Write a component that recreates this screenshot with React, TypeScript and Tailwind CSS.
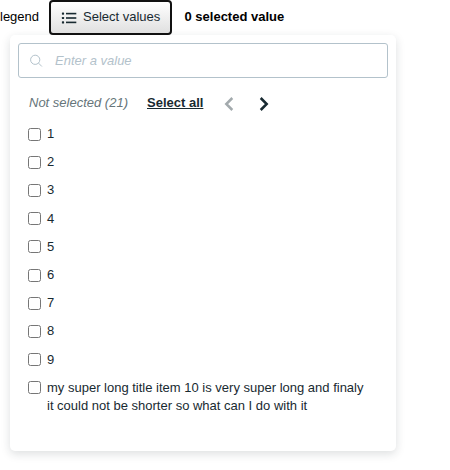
const items = [
  '1', '2', '3', '4', '5', '6', '7', '8', '9',
  'my super long title item 10 is very super long and finaly it could not be shorter so what can I do with it',
];

function ListIcon() {
  return (
    <svg width="16" height="12" viewBox="0 0 16 12" fill="#182a31" className="mt-0.5 shrink-0">
      <rect x="0.9" y="0.5" width="2.2" height="2.2" rx="0.6" />
      <rect x="0.9" y="4.9" width="2.2" height="2.2" rx="0.6" />
      <rect x="0.9" y="9.3" width="2.2" height="2.2" rx="0.6" />
      <rect x="5" y="0.8" width="10.3" height="1.6" />
      <rect x="5" y="5.2" width="10.3" height="1.6" />
      <rect x="5" y="9.6" width="10.3" height="1.6" />
    </svg>
  );
}

function SearchIcon() {
  return (
    <svg width="13" height="13" viewBox="0 0 13 13" fill="none" stroke="#b3c2cb" strokeWidth="1" className="shrink-0">
      <circle cx="5.2" cy="5.8" r="4.6" />
      <path d="M8.5 9.1L11.9 12.5" />
    </svg>
  );
}

function Chevron({ d, color }: { d: string; color: string }) {
  return (
    <svg width="10" height="16" viewBox="0 0 10 16" fill="none" stroke={color} strokeWidth="2.5">
      <path d={d} />
    </svg>
  );
}

export default function App() {
  return (
    <div className="h-[470px] w-[450px] overflow-hidden bg-white font-['Liberation_Sans',Arial,sans-serif] text-[13px] leading-[18.2px] text-[#182a31]">
      <div className="flex h-[35px] items-start text-black">
        <span className="w-[49px] pt-[8px]">legend</span>
        <button className="flex h-[35px] w-[123px] items-start rounded-[4px] border-2 border-[#111] bg-linear-to-b from-white to-[#e0e0e0] pt-[6px] pl-[10px] text-[#182a31]">
          <span className="pt-[2px]">
            <ListIcon />
          </span>
          <span className="ml-[6px] whitespace-nowrap">Select values</span>
        </button>
        <span className="ml-[12.5px] pt-[8px] font-bold">0 selected value</span>
      </div>

      <div className="ml-[10px] h-[416px] w-[386px] rounded-[5px] bg-white p-2 shadow-[0_3px_10px_rgba(24,42,49,0.15)]">
        <div className="flex h-[35px] items-center rounded-[3px] border border-[#b3c2cb] pl-[11px]">
          <SearchIcon />
          <input
            placeholder="Enter a value"
            className="ml-3 w-[300px] bg-transparent pt-[2px] italic outline-none placeholder:text-[#b3c2cb]"
          />
        </div>

        <div className="mt-[16px] flex h-[18px] items-center pl-[11px]">
          <span className="w-[118px] text-[#66757a] italic">Not selected (21)</span>
          <button className="font-bold underline">Select all</button>
          <span className="mt-[2px] ml-[21px]">
            <Chevron d="M8.3 2L2.3 8L8.3 14" color="#a3aaad" />
          </span>
          <span className="mt-[2px] ml-[25px]">
            <Chevron d="M1.7 2L7.7 8L1.7 14" color="#182a31" />
          </span>
        </div>

        <ul className="mt-[13px] flex flex-col gap-[10px] pl-[10px]">
          {items.map((item) => (
            <li key={item}>
              <label className="flex items-start">
                <input type="checkbox" className="mt-[2.6px] h-[13px] w-[13px] shrink-0" />
                <span className="ml-[6px] w-[322px]">{item}</span>
              </label>
            </li>
          ))}
        </ul>
      </div>
    </div>
  );
}
